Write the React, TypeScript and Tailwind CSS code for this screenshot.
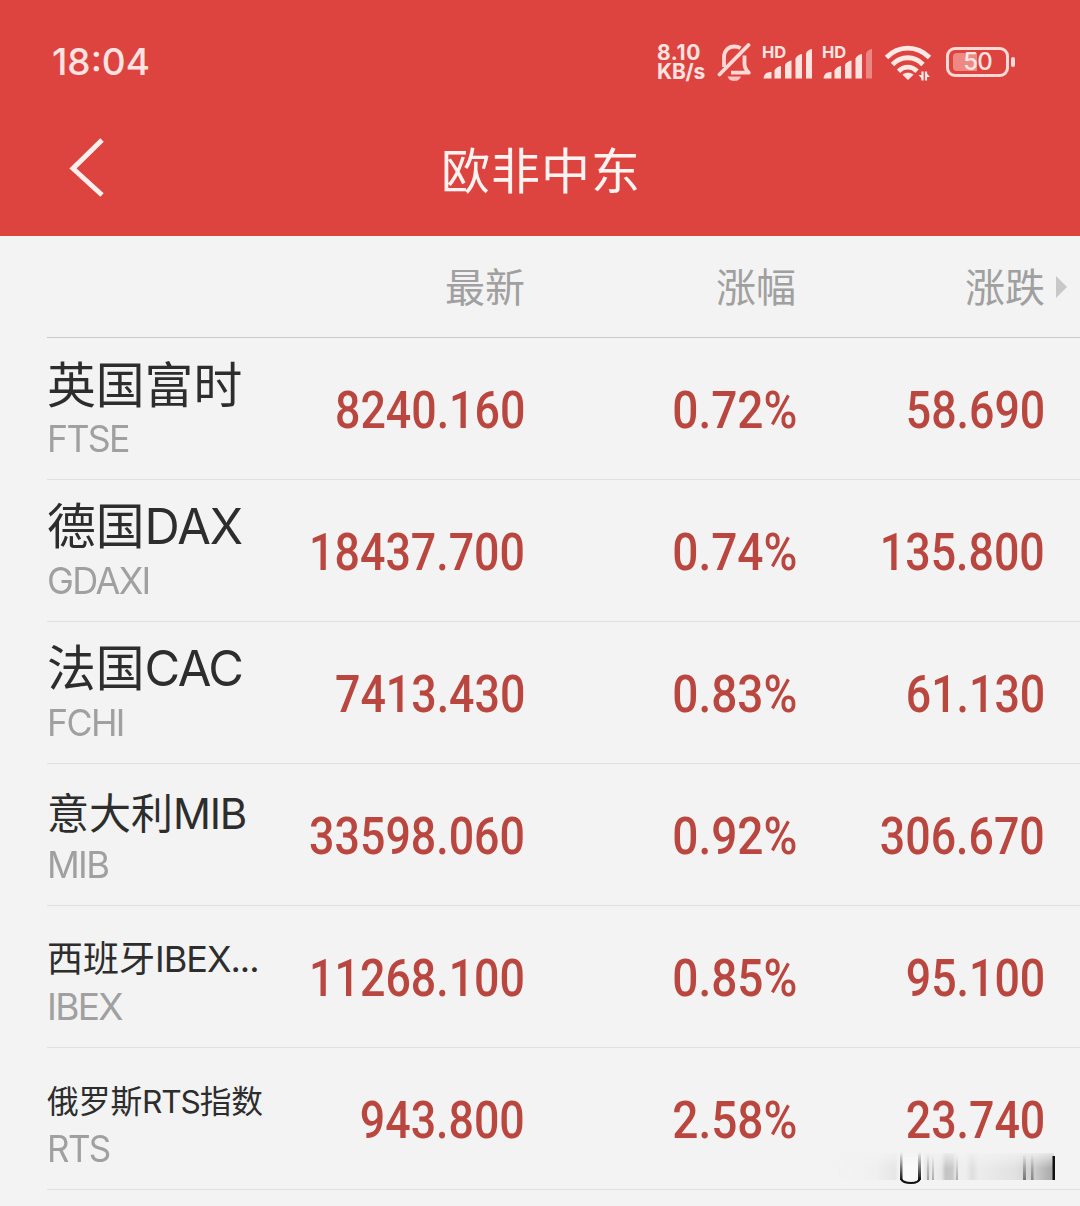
import React from "react";

type Row = {
  name: React.ReactNode;
  code: string;
  codeClass: string;
  nameClass: string;
  last: string;
  pct: string;
  change: string;
};

const LATIN = "inline-block origin-left font-['Inter','Noto_Sans_CJK_SC',sans-serif]";

const rows: Row[] = [
  { name: "英国富时", nameClass: "text-[48.8px] pb-[7px]", code: "FTSE", codeClass: "scale-x-[0.965]", last: "8240.160", pct: "0.72%", change: "58.690" },
  { name: <>德国<span className={`${LATIN} tracking-[-1px]`}>DAX</span></>, nameClass: "text-[48.8px] pb-[6px]", code: "GDAXI", codeClass: "scale-x-[0.975]", last: "18437.700", pct: "0.74%", change: "135.800" },
  { name: <>法国<span className={`${LATIN} tracking-[-1.5px]`}>CAC</span></>, nameClass: "text-[48.8px] pb-[6px]", code: "FCHI", codeClass: "scale-x-[0.965]", last: "7413.430", pct: "0.83%", change: "61.130" },
  { name: <>意大利<span className={`${LATIN} tracking-[-1.2px]`}>MIB</span></>, nameClass: "text-[42px] pt-[1px]", code: "MIB", codeClass: "scale-x-[0.98]", last: "33598.060", pct: "0.92%", change: "306.670" },
  { name: <>西班牙<span className={`${LATIN} tracking-[-1px]`}>IBEX...</span></>, nameClass: "text-[36px] pt-[6px]", code: "IBEX", codeClass: "scale-x-100", last: "11268.100", pct: "0.85%", change: "95.100" },
  { name: <>俄罗斯<span className={`${LATIN} tracking-[-1.2px]`}>RTS</span>指数</>, nameClass: "text-[31.7px] pt-[10px]", code: "RTS", codeClass: "scale-x-[0.945]", last: "943.800", pct: "2.58%", change: "23.740" },
];

const NUM =
  "inline-block origin-right whitespace-nowrap font-['Roboto',sans-serif] text-[52px] font-medium leading-[60px] text-[#b9473f]";

function Num({ children }: { children: string }) {
  return <span className={`${NUM} scale-x-[0.86]`}>{children}</span>;
}

function Pct({ children }: { children: string }) {
  return <span className={`${NUM} scale-x-[0.885]`}>{children}</span>;
}

function BellOff() {
  return (
    <svg width="36" height="40" viewBox="0 0 36 40" fill="none" stroke="#ffd9d5" strokeWidth="3.800" strokeLinejoin="round">
      <path d="M7 25V15.500C7 8.500 11.500 4.500 17.500 4.500c2.400 0 4.300.6 6 1.600M27.500 13.500v8.500c0 3.500 1.500 6 4.300 8.600H14" />
      <path d="M2.500 32.500 31.500 3" strokeLinecap="round" />
      <path d="M10.500 34.500h13.500c-1.500 3.400-3.500 4.400-6.800 4.400s-5.200-1-6.700-4.400Z" fill="#ffc4bf" stroke="none" />
    </svg>
  );
}

function Signal({ weak }: { weak?: boolean }) {
  return (
    <div className="relative h-[40px] w-[52px]">
      <span className="absolute left-0 top-[3px] font-['Inter',sans-serif] text-[16.500px] font-bold leading-[14px] text-[#ffe3e0]">HD</span>
      <svg className="absolute left-0 top-0" width="52" height="40" viewBox="0 0 52 40" fill="#ffe3e0">
        <path d="M1.500 36.500c.5-4.500 3-6.500 8-6.500v6.500Z" />
        <path d="M12.500 28.500q2-4 6.500-4.500v12.500h-6.500Z" />
        <path d="M23 23q2-4 6.500-4.500v18H23Z" />
        <path d="M33.500 16.500q2-4 6.500-4.500v24.500h-6.500Z" />
        <path d="M44 11.500q1.500-4 6-4.500v29.500h-6Z" fillOpacity={weak ? 0.42 : 1} />
      </svg>
    </div>
  );
}

function Wifi() {
  return (
    <svg width="48" height="40" viewBox="0 0 48 40" fill="none" stroke="#ffe8e5" strokeWidth="4.800">
      <path d="M2.500 15.500C14.500 3 33 3 45.500 15.500" />
      <path d="M8.500 22.500c8.500-9 22-9 30.500 0" />
      <path d="M14.500 29.300c5.500-5.500 13-5.500 18.500 0" />
      <path d="M18.500 32.700c3-2.600 8-2.600 11 0L24 38Z" fill="#ffe8e5" stroke="none" />
      <path d="M38.500 29.500v9M42 38.500v-9" strokeWidth="2.200" />
      <path d="M34.500 33h4v4.500ZM42 30.500l4 4.500h-4Z" fill="#ffe8e5" stroke="none" />
    </svg>
  );
}

function Battery() {
  return (
    <div className="flex items-center">
      <div className="relative flex h-[30px] w-[63px] items-center justify-center rounded-[9px] border-[3px] border-[#ffd9d5]">
        <div className="absolute left-[4px] top-[3px] h-[18px] w-[24px] rounded-l-[4px] bg-[#ee8883]" />
        <span className="relative font-['Inter',sans-serif] text-[24px] font-medium leading-none tracking-[-1px] text-[#ffe6e3]">50</span>
      </div>
      <div className="ml-[2px] h-[10px] w-[4px] rounded-[2px] bg-[#ffd9d5]" />
    </div>
  );
}

/* Faded streak strip lying over the last row */
function Streaks() {
  return (
    <svg className="absolute left-[833px] top-[1150px]" width="224" height="36" viewBox="0 0 224 36">
      <defs>
        <linearGradient id="h" x1="0" x2="1" y1="0" y2="0">
          <stop offset="0" stopColor="#f3f3f3" stopOpacity="0" />
          <stop offset=".2" stopColor="#efefef" />
          <stop offset=".28" stopColor="#e6e6e6" />
          <stop offset=".31" stopColor="#fafafa" />
          <stop offset=".4" stopColor="#fafafa" />
          <stop offset=".43" stopColor="#dcdcdc" />
          <stop offset=".45" stopColor="#eee" />
          <stop offset=".49" stopColor="#e8e8e8" />
          <stop offset=".51" stopColor="#c4c4c4" />
          <stop offset=".54" stopColor="#c8c8c8" />
          <stop offset=".56" stopColor="#eee" />
          <stop offset=".6" stopColor="#eee" />
          <stop offset=".63" stopColor="#dedede" />
          <stop offset=".66" stopColor="#ececec" />
          <stop offset=".82" stopColor="#e2e2e2" />
          <stop offset=".91" stopColor="#cecece" />
          <stop offset="1" stopColor="#a6a6a6" />
        </linearGradient>
        <linearGradient id="v" x1="0" x2="0" y1="0" y2="1">
          <stop offset="0" stopColor="#fff" stopOpacity="0" />
          <stop offset=".5" stopColor="#fff" />
        </linearGradient>
        <linearGradient id="k" x1="0" x2="0" y1="0" y2="1">
          <stop offset="0" stopColor="#111" stopOpacity="0" />
          <stop offset="1" stopColor="#111" />
        </linearGradient>
        <mask id="m"><rect width="224" height="36" fill="url(#v)" /></mask>
      </defs>
      <rect y="3" width="221" height="27" fill="url(#h)" mask="url(#m)" />
      <g fill="url(#k)">
        <rect x="67" y="2" width="2.500" height="28" />
        <rect x="85" y="2" width="3" height="28" />
        <rect x="94" y="5" width="2" height="25" opacity=".3" />
        <rect x="99" y="5" width="2" height="25" opacity=".3" />
        <rect x="123" y="5" width="2" height="25" opacity=".3" />
        <rect x="190" y="4" width="3" height="26" opacity=".5" />
        <rect x="198" y="4" width="2.500" height="26" opacity=".4" />
      </g>
      <path d="M68 29q2 4 10 4t9-5" fill="none" stroke="#111" strokeWidth="2" />
      <rect x="219.500" y="6" width="2.500" height="24" fill="#111" />
    </svg>
  );
}

export default function App() {
  return (
    <div className="relative h-[1206px] w-[1080px] overflow-hidden bg-[#f3f3f3] font-['Noto_Sans_CJK_SC',sans-serif]">
      <header className="h-[236px] bg-[#dd4440]">
        <div className="flex h-[124px] items-center justify-between pl-[52px] pr-[65px]">
          <span className="-mt-[2px] font-['Inter',sans-serif] text-[37px] font-medium leading-none text-[#ffe3e0]">18:04</span>
          <div className="flex items-center">
            <div className="mr-[12px] w-[48px] whitespace-nowrap font-['Inter',sans-serif] text-[21px] font-bold leading-[19px] text-[#ffe3e0]">
              <div className="tracking-[0.6px]">8.10</div>
              <div className="tracking-[-0.2px]">KB/s</div>
            </div>
            <BellOff />
            <div className="ml-[9px]"><Signal /></div>
            <div className="ml-[8px]"><Signal weak /></div>
            <div className="ml-[10px] mr-[14px]"><Wifi /></div>
            <Battery />
          </div>
        </div>
        <div className="grid grid-cols-[1fr_auto_1fr] items-center">
          <svg className="ml-[68px]" width="38" height="62" viewBox="0 0 38 62" fill="none" stroke="#fff0ee" strokeWidth="5">
            <path d="M34 3 5 31.500 34 58" />
          </svg>
          <h1 className="pl-[2px] text-[49px] leading-[88px] tracking-[1px] text-[#fff3f1]">欧非中东</h1>
          <span />
        </div>
      </header>

      <div className="pl-[47px]">
        <div className="flex h-[102px] items-center border-b border-[#c9c9c9] text-[40px] text-[#a0a0a0]">
          <div className="w-[478px] pb-[3px] text-right">最新</div>
          <div className="w-[271px] pb-[3px] text-right">涨幅</div>
          <div className="w-[249px] pb-[3px] text-right">涨跌</div>
          <svg className="ml-[11px]" width="12" height="24" viewBox="0 0 12 24"><path d="M0 1 11 12 0 23Z" fill="#c8c8c8" /></svg>
        </div>
        {rows.map((r) => (
          <div key={r.code} className="flex h-[142px] items-center border-b border-[#e0e0e0]">
            <div className="h-full w-[230px] shrink-0 whitespace-nowrap">
              <div className="flex h-[82px] items-center pt-[14px]">
                <div className={`${r.nameClass} leading-none text-[#2d2d2d]`}>{r.name}</div>
              </div>
              <div className={`${r.codeClass} origin-left font-['Inter',sans-serif] text-[37px] leading-[38px] tracking-[-1.7px] text-[#a0a0a0]`}>{r.code}</div>
            </div>
            <div className="flex w-[248px] justify-end pt-[5px]"><Num>{r.last}</Num></div>
            <div className="flex w-[272px] justify-end pt-[5px]"><Pct>{r.pct}</Pct></div>
            <div className="flex w-[248px] justify-end pt-[5px]"><Num>{r.change}</Num></div>
          </div>
        ))}
      </div>
      <Streaks />
    </div>
  );
}
